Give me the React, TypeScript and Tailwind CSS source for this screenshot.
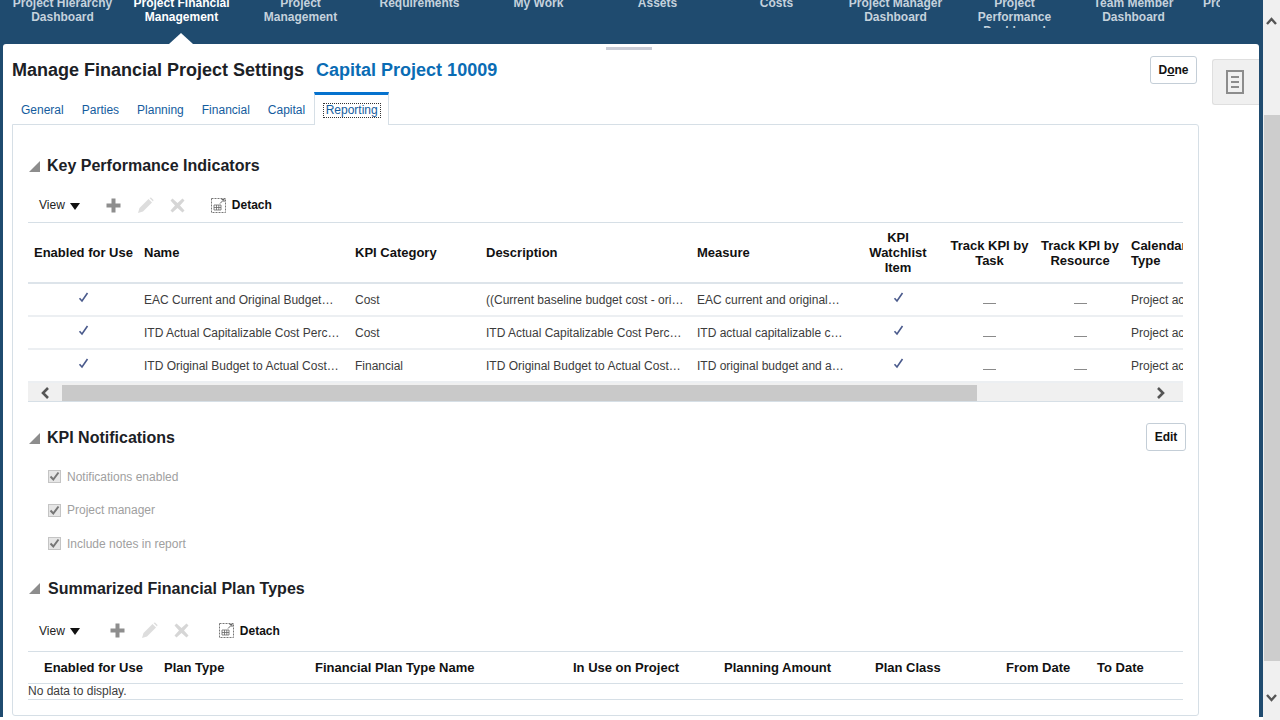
import React from 'react';

const navItems = [
  { label: 'Project Hierarchy Dashboard' },
  { label: 'Project Financial Management', active: true },
  { label: 'Project Management' },
  { label: 'Requirements' },
  { label: 'My Work' },
  { label: 'Assets' },
  { label: 'Costs' },
  { label: 'Project Manager Dashboard' },
  { label: 'Project Performance Dashboard' },
  { label: 'Team Member Dashboard' },
];

const tabs = ['General', 'Parties', 'Planning', 'Financial', 'Capital'];

const kpiRows = [
  ['EAC Current and Original Budget…', 'Cost', '((Current baseline budget cost - ori…', 'EAC current and original…'],
  ['ITD Actual Capitalizable Cost Perc…', 'Cost', 'ITD Actual Capitalizable Cost Perc…', 'ITD actual capitalizable c…'],
  ['ITD Original Budget to Actual Cost…', 'Financial', 'ITD Original Budget to Actual Cost…', 'ITD original budget and a…'],
];

const kpiCols = 'grid grid-cols-[110px_211px_131px_211px_161px_92px_91px_90px_58px]';
const planCols = 'grid grid-cols-[130px_151px_258px_151px_151px_131px_91px_92px]';

const Check = () => (
  <svg width="11" height="11" viewBox="0 0 11 11" className="block">
    <path d="M1.5 6.2 L4 9 L9.5 1" fill="none" stroke="#4a5a8c" strokeWidth="1.6" />
  </svg>
);

const Dash = () => <div className="mt-[7px] h-px w-[13px] bg-[#8a8a8a]" />;

const SectionTitle = ({ children }: { children: React.ReactNode }) => (
  <div className="flex items-center gap-[7px] pl-[1px]">
    <svg width="11" height="11" viewBox="0 0 11 11" className="block shrink-0">
      <path d="M0 11 L11 0 L11 11 Z" fill="#8d8d8d" />
    </svg>
    <h2 className="text-[16px] font-bold leading-[20px] text-[#1c2126]">{children}</h2>
  </div>
);

const Toolbar = ({ iconGap, detachMl }: { iconGap: string; detachMl: string }) => (
  <div className="flex h-full items-center pl-[11px]">
    <span className="text-[12px] text-[#222]">View</span>
    <svg width="10" height="7" viewBox="0 0 10 7" className="ml-[5px] mt-[2px] block">
      <path d="M0 0 H10 L5 7 Z" fill="#111" />
    </svg>
    <div className={`flex items-center gap-[16px] ${iconGap}`}>
      <svg width="15" height="15" viewBox="0 0 15 15" className="block">
        <path d="M5.5 0.5 H9.5 V5.5 H14.5 V9.5 H9.5 V14.5 H5.5 V9.5 H0.5 V5.5 H5.5 Z" fill="#8e8e8e" />
      </svg>
      <svg width="17" height="17" viewBox="0 0 17 17" className="block">
        <path d="M1 16 L2.5 11 L11.5 2 L15 5.5 L6 14.5 Z" fill="#dddddd" />
        <path d="M12.5 1 L14 0.5 L16.5 3 L16 4.5 Z" fill="#dddddd" />
      </svg>
      <svg width="15" height="15" viewBox="0 0 15 15" className="block">
        <path d="M2.5 0.5 L7.5 5 L12.5 0.5 L14.5 2.5 L10 7.5 L14.5 12.5 L12.5 14.5 L7.5 10 L2.5 14.5 L0.5 12.5 L5 7.5 L0.5 2.5 Z" fill="#d6d6d6" />
      </svg>
    </div>
    <svg width="15" height="15" viewBox="0 0 15 15" className={`block ${detachMl}`}>
      <rect x="0.5" y="0.5" width="14" height="14" fill="none" stroke="#777" strokeDasharray="2 1" />
      <path d="M9 5.5 L13 1.5 M10.5 1.5 H13 V4" fill="none" stroke="#666" />
      <path d="M3 7 H10 V12 H3 Z M3 9.5 H10 M5.5 7 V12 M7.8 7 V12" fill="none" stroke="#666" strokeWidth="0.8" />
    </svg>
    <span className="ml-[6px] text-[12px] font-bold text-[#111]">Detach</span>
  </div>
);

const Option = ({ label }: { label: string }) => (
  <div className="flex h-[33.5px] items-center gap-[6px] pl-[20px]">
    <div className="flex h-[13px] w-[13px] items-center justify-center border border-[#c4c4c4] bg-[#e6e6e6]">
      <svg width="11" height="11" viewBox="0 0 11 11" className="block">
        <path d="M1.5 5.5 L4.3 8.5 L9.5 1.5" fill="none" stroke="#777" strokeWidth="2" />
      </svg>
    </div>
    <span className="text-[12px] text-[#a0a0a0]">{label}</span>
  </div>
);

export default function App() {
  return (
    <div className="flex h-[720px] w-[1280px] overflow-hidden bg-white font-['Liberation_Sans',Arial,sans-serif]">
      <div className="flex h-[717px] w-[1263px] shrink-0 flex-col bg-[#1f4b6f]">
        {/* top nav, scrolled so the first line is half gone */}
        <nav className="relative h-[44px] shrink-0 overflow-hidden pl-[3px]">
          <div className="flex h-[32px] -translate-y-[4px] overflow-hidden">
            {navItems.map(item => (
              <div
                key={item.label}
                className={`w-[119px] shrink-0 px-[8px] text-center text-[12px] font-bold leading-[14px] ${
                  item.active ? 'text-white' : 'text-[#c5d2dd]'
                }`}
              >
                {item.label}
              </div>
            ))}
            <div className="ml-[10px] w-[17px] shrink-0 overflow-hidden whitespace-nowrap text-[12px] font-bold leading-[14px] text-[#c5d2dd]">
              Project
            </div>
          </div>
          <div className="absolute bottom-0 left-[169px] h-0 w-0 border-x-[12px] border-b-[11px] border-x-transparent border-b-white" />
        </nav>

        <main className="relative ml-[3px] mr-[4px] flex min-h-0 flex-1 flex-col rounded-t-[3px] bg-white px-[9px] pb-[1px]">
          <div className="absolute left-[603px] top-[3px] h-[3px] w-[46px] bg-[#c9ccd6]" />

          <div className="flex h-[48px] shrink-0 items-start justify-between pr-[53px]">
            <div className="mt-[15px] flex items-center gap-[12px]">
              <h1 className="text-[18px] font-bold leading-[22px] text-[#1c2126]">Manage Financial Project Settings</h1>
              <span className="text-[18px] font-bold leading-[22px] text-[#0a6cb4]">Capital Project 10009</span>
            </div>
            <button className="mt-[12px] h-[28px] w-[47px] rounded-[3px] border border-[#c4ced7] bg-white text-[12px] font-bold text-[#111]">
              D<span className="underline">o</span>ne
            </button>
          </div>

          <div className="absolute right-0 top-[15px] flex h-[46px] w-[47px] items-center justify-center rounded-l-[3px] border border-r-0 border-[#dfdfdf] bg-[#f0f0f0] pr-[2px]">
            <svg width="18" height="24" viewBox="0 0 18 24" className="block">
              <rect x="1" y="1" width="16" height="22" fill="none" stroke="#8c8c8c" strokeWidth="2" />
              <path d="M5 7 H13 M5 12 H13 M5 17 H13" stroke="#8c8c8c" strokeWidth="2" />
            </svg>
          </div>

          <div className="mr-[51px] flex min-h-0 flex-1 flex-col">
            <div className="relative z-10 flex h-[33px] shrink-0 items-end pl-[9px] text-[12px] text-[#145c9e]">
              {tabs.map(tab => (
                <span key={tab} className="mr-[18px] pb-[8px] leading-[14px]">
                  {tab}
                </span>
              ))}
              <div className="-ml-[9px] flex h-[33px] w-[75px] items-center justify-center border-x border-t-[3px] border-x-[#d6dfe6] border-t-[#0572ce] bg-white pt-[1px]">
                <span className="border border-dotted border-[#333] px-[2px] leading-[13px]">Reporting</span>
              </div>
            </div>

            <div className="-mt-px flex min-h-0 flex-1 flex-col rounded-b-[3px] rounded-tr-[3px] border border-[#d6dfe6] px-[15px] pb-[10px] pt-[31px]">
              <SectionTitle>Key Performance Indicators</SectionTitle>

              <div className="mt-[14px] h-[30px] shrink-0">
                <Toolbar iconGap="ml-[26px]" detachMl="ml-[26px]" />
              </div>

              <div className="mt-[2px] shrink-0 overflow-hidden border-t border-[#d6dfe6]">
                <div className={`${kpiCols} h-[61px] items-center border-b-2 border-[#dde4ea] text-[13px] font-bold leading-[15px] text-[#111]`}>
                  <div className="pl-[6px]">Enabled for Use</div>
                  <div className="pl-[6px]">Name</div>
                  <div className="pl-[6px]">KPI Category</div>
                  <div className="pl-[6px]">Description</div>
                  <div className="pl-[6px]">Measure</div>
                  <div className="text-center">
                    KPI
                    <br />
                    Watchlist
                    <br />
                    Item
                  </div>
                  <div className="text-center">
                    Track KPI by
                    <br />
                    Task
                  </div>
                  <div className="text-center">
                    Track KPI by
                    <br />
                    Resource
                  </div>
                  <div className="whitespace-nowrap pl-[6px]">
                    Calendar
                    <br />
                    Type
                  </div>
                </div>
                {kpiRows.map(row => (
                  <div key={row[0]} className={`${kpiCols} h-[33px] items-center border-b-2 border-[#eceff2] text-[12px] text-[#3c3c3c]`}>
                    <div className="flex justify-center pb-[4px] pl-[1px]">
                      <Check />
                    </div>
                    {row.map(cell => (
                      <div key={cell} className="overflow-hidden whitespace-nowrap pl-[6px]">
                        {cell}
                      </div>
                    ))}
                    <div className="flex justify-center pb-[4px]">
                      <Check />
                    </div>
                    <div className="flex justify-center">
                      <Dash />
                    </div>
                    <div className="flex justify-center">
                      <Dash />
                    </div>
                    <div className="overflow-hidden whitespace-nowrap pl-[6px]">Project accounting</div>
                  </div>
                ))}
                <div className="flex h-[19px] items-center border-b border-[#d6dfe6] bg-[#f0f0f0] pt-[2px]">
                  <div className="flex w-[34px] shrink-0 justify-center">
                    <svg width="11" height="12" viewBox="0 0 11 12" className="block">
                      <path d="M8 1 L3 6 L8 11" fill="none" stroke="#555" strokeWidth="2.6" />
                    </svg>
                  </div>
                  <div className="h-full w-[915px] bg-[#c9c9c9]" />
                  <div className="flex flex-1 justify-end pr-[17px]">
                    <svg width="11" height="12" viewBox="0 0 11 12" className="block">
                      <path d="M3 1 L8 6 L3 11" fill="none" stroke="#555" strokeWidth="2.6" />
                    </svg>
                  </div>
                </div>
              </div>

              <div className="mt-[21px] flex h-[28px] shrink-0 items-center justify-between">
                <div className="mt-[2px]">
                  <SectionTitle>KPI Notifications</SectionTitle>
                </div>
                <button className="-mr-[3px] h-[28px] w-[40px] rounded-[3px] border border-[#c4ced7] bg-white text-[12px] font-bold text-[#111]">
                  Edit
                </button>
              </div>

              <div className="mt-[9px] flex shrink-0 flex-col">
                <Option label="Notifications enabled" />
                <Option label="Project manager" />
                <Option label="Include notes in report" />
              </div>

              <div className="mt-[18px] shrink-0">
                <div className="flex items-center gap-[8px] pl-[1px]">
                  <svg width="11" height="11" viewBox="0 0 11 11" className="block shrink-0">
                    <path d="M0 11 L11 0 L11 11 Z" fill="#8d8d8d" />
                  </svg>
                  <h2 className="text-[16px] font-bold leading-[20px] text-[#1c2126]">Summarized Financial Plan Types</h2>
                </div>
              </div>

              <div className="mt-[17px] h-[30px] shrink-0">
                <Toolbar iconGap="ml-[30px]" detachMl="ml-[30px]" />
              </div>

              <div className="mt-[5px] shrink-0 border-t border-[#d6dfe6]">
                <div className={`${planCols} h-[32px] items-center border-b border-[#d6dfe6] pt-[2px] text-[13px] font-bold text-[#111]`}>
                  <div className="pl-[16px]">Enabled for Use</div>
                  <div className="pl-[6px]">Plan Type</div>
                  <div className="pl-[6px]">Financial Plan Type Name</div>
                  <div className="pl-[6px]">In Use on Project</div>
                  <div className="pl-[6px]">Planning Amount</div>
                  <div className="pl-[6px]">Plan Class</div>
                  <div className="pl-[6px]">From Date</div>
                  <div className="pl-[6px]">To Date</div>
                </div>
                <div className="flex h-[16px] items-center border-b border-[#d6dfe6] text-[12px] text-[#3c3c3c]">
                  No data to display.
                </div>
              </div>
            </div>
          </div>
        </main>
      </div>

      {/* page scrollbar */}
      <div className="flex h-[720px] w-[17px] shrink-0 flex-col bg-[#f0f0f0]">
        <div className="flex h-[44px] shrink-0 items-start justify-center pt-[17px]">
          <svg width="11" height="8" viewBox="0 0 11 8" className="block">
            <path d="M1 7 L5.5 2 L10 7" fill="none" stroke="#555" strokeWidth="2.4" />
          </svg>
        </div>
        <div className="mt-[71px] h-[546px] w-[16px] shrink-0 self-end bg-[#cdcdcd]" />
        <div className="flex flex-1 items-start justify-center pt-[33px]">
          <svg width="11" height="8" viewBox="0 0 11 8" className="block">
            <path d="M1 1 L5.5 6 L10 1" fill="none" stroke="#555" strokeWidth="2.4" />
          </svg>
        </div>
      </div>
    </div>
  );
}
